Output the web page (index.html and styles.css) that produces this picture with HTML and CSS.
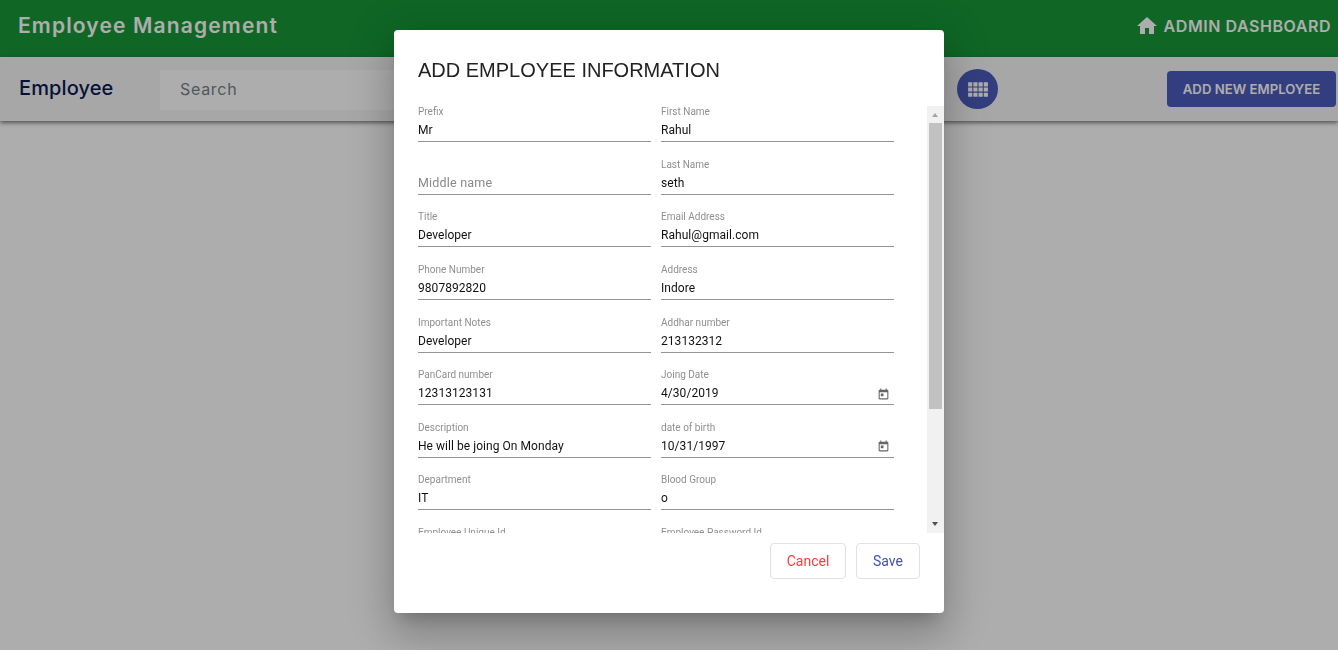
FILE: index.html
```html
<!DOCTYPE html>
<html lang="en">
<head>
    <meta charset="UTF-8">
    <title>Employee Management</title>
    <link rel="stylesheet" href="styles.css">
</head>
<body>
    <header class="topbar">
        <span class="brand">Employee Management</span>
        <a class="dash-link">
            <svg class="home-icon" viewBox="0 0 24 24"><path d="M10 20v-6h4v6h5v-8h3L12 3 2 12h3v8z"/></svg>
            ADMIN DASHBOARD
        </a>
    </header>
    <div class="toolbar">
        <span class="page-title">Employee</span>
        <input class="search" type="text" placeholder="Search">
        <button class="round-btn">
            <svg class="grid-icon" viewBox="0 0 24 24"><path d="M3 9h4V5H3v4zm0 5h4v-4H3v4zm5 0h4v-4H8v4zm5 0h4v-4h-4v4zM8 9h4V5H8v4zm5-4v4h4V5h-4zm5 9h4v-4h-4v4zM3 19h4v-4H3v4zm5 0h4v-4H8v4zm5 0h4v-4h-4v4zm5 0h4v-4h-4v4zm0-14v4h4V5h-4z"/></svg>
        </button>
        <button class="add-btn">ADD NEW EMPLOYEE</button>
    </div>

    <div class="backdrop"></div>

    <div class="modal">
        <h2 class="modal-title">ADD EMPLOYEE INFORMATION</h2>
        <div class="modal-body">
            <form class="form-grid" autocomplete="off">
                <div class="field"><label>Prefix</label><input type="text" value="Mr"></div>
                <div class="field"><label>First Name</label><input type="text" value="Rahul"></div>
                <div class="field"><label></label><input class="big-ph" type="text" placeholder="Middle name"></div>
                <div class="field"><label>Last Name</label><input type="text" value="seth"></div>
                <div class="field"><label>Title</label><input type="text" value="Developer"></div>
                <div class="field"><label>Email Address</label><input type="text" value="Rahul@gmail.com"></div>
                <div class="field"><label>Phone Number</label><input type="text" value="9807892820"></div>
                <div class="field"><label>Address</label><input type="text" value="Indore"></div>
                <div class="field"><label>Important Notes</label><input type="text" value="Developer"></div>
                <div class="field"><label>Addhar number</label><input type="text" value="213132312"></div>
                <div class="field"><label>PanCard number</label><input type="text" value="12313123131"></div>
                <div class="field">
                    <label>Joing Date</label>
                    <div class="date-wrap">
                        <input type="text" value="4/30/2019">
                        <svg class="cal-icon" viewBox="0 0 24 24"><path d="M19 3h-1V1h-2v2H8V1H6v2H5c-1.11 0-1.99.9-1.99 2L3 19c0 1.1.89 2 2 2h14c1.1 0 2-.9 2-2V5c0-1.1-.9-2-2-2zm0 16H5V8h14v11zM7 10h5v5H7z"/></svg>
                    </div>
                </div>
                <div class="field"><label>Description</label><input type="text" value="He will be joing On Monday"></div>
                <div class="field">
                    <label>date of birth</label>
                    <div class="date-wrap">
                        <input type="text" value="10/31/1997">
                        <svg class="cal-icon" viewBox="0 0 24 24"><path d="M19 3h-1V1h-2v2H8V1H6v2H5c-1.11 0-1.99.9-1.99 2L3 19c0 1.1.89 2 2 2h14c1.1 0 2-.9 2-2V5c0-1.1-.9-2-2-2zm0 16H5V8h14v11zM7 10h5v5H7z"/></svg>
                    </div>
                </div>
                <div class="field"><label>Department</label><input type="text" value="IT"></div>
                <div class="field"><label>Blood Group</label><input type="text" value="o"></div>
                <div class="field"><label>Employee Unique Id</label><input type="text"></div>
                <div class="field"><label>Employee Password Id</label><input type="text"></div>
            </form>
            <div class="scrollbar">
                <span class="arrow-up"></span>
                <span class="thumb"></span>
                <span class="arrow-down"></span>
            </div>
        </div>
        <div class="modal-actions">
            <button class="text-btn cancel">Cancel</button>
            <button class="text-btn save">Save</button>
        </div>
    </div>
</body>
</html>
```

FILE: styles.css
```css
* {
    box-sizing: border-box;
}

html, body {
    height: 100%;
}

body {
    margin: 0;
    background: #fff;
    overflow: hidden;
    font-family: Inter, "Liberation Sans", sans-serif;
}

.topbar {
    height: 57px;
    background: #179737;
    display: flex;
    align-items: center;
    justify-content: space-between;
    padding: 0 7px 6px 18px;
    color: #fff;
}

.brand {
    font-size: 21px;
    font-weight: 600;
    letter-spacing: 1.15px;
}

.dash-link {
    display: flex;
    align-items: center;
    gap: 5px;
    font-size: 16px;
    font-weight: 600;
    letter-spacing: 0.55px;
}

.home-icon {
    width: 24px;
    height: 24px;
    fill: #fff;
}

.toolbar {
    height: 64px;
    background: #f7f7f7;
    display: flex;
    align-items: center;
    padding: 0 2px 0 19px;
    box-shadow: 0 2px 4px rgba(0, 0, 0, 0.5);
}

.page-title {
    width: 141px;
    margin-bottom: 2px;
    font-size: 20px;
    font-weight: 500;
    letter-spacing: 0.1px;
    color: #0a1a4f;
}

.search {
    width: 785px;
    height: 40px;
    margin-top: 2px;
    border: none;
    outline: none;
    background: #fff;
    padding: 0 20px 2px;
    font-family: Inter, sans-serif;
    font-size: 16px;
    letter-spacing: 0.7px;
}

.search::placeholder {
    color: #7a7f8a;
}

.round-btn {
    width: 41px;
    height: 40px;
    margin-left: 12px;
    border: none;
    border-radius: 50%;
    background: #4b5cbb;
    padding: 0;
    display: flex;
    align-items: center;
    justify-content: center;
}

.grid-icon {
    width: 25px;
    height: 25px;
    fill: #fff;
}

.add-btn {
    width: 169px;
    height: 36px;
    margin-left: auto;
    border: none;
    border-radius: 4px;
    background: #4b5cbb;
    color: #fff;
    font-family: Inter, sans-serif;
    font-size: 13.2px;
    font-weight: 600;
}

.backdrop {
    position: fixed;
    inset: 0;
    background: rgba(0, 0, 0, 0.32);
}

.modal {
    position: absolute;
    left: 394px;
    top: 30px;
    width: 550px;
    height: 583px;
    background: #fff;
    border-radius: 4px;
    box-shadow: 0 11px 15px -7px rgba(0, 0, 0, 0.2), 0 24px 38px 3px rgba(0, 0, 0, 0.14), 0 9px 46px 8px rgba(0, 0, 0, 0.12);
    display: flex;
    flex-direction: column;
}

.modal-title {
    margin: 0;
    height: 76px;
    padding: 28px 0 0 24px;
    font-family: "Liberation Sans", Arial, sans-serif;
    font-size: 20px;
    line-height: 24px;
    font-weight: 400;
    color: #222;
}

.modal-body {
    position: relative;
    height: 427px;
    padding-left: 24px;
    overflow: hidden;
}

.scrollbar {
    position: absolute;
    top: 0;
    right: 0;
    bottom: 0;
    width: 17px;
    background: #f1f1f1;
}

.thumb {
    position: absolute;
    top: 17px;
    left: 2px;
    width: 13px;
    height: 286px;
    background: #c1c1c1;
}

.arrow-up, .arrow-down {
    position: absolute;
    left: 5px;
    width: 0;
    height: 0;
    border-left: 3.5px solid transparent;
    border-right: 3.5px solid transparent;
}

.arrow-up {
    top: 7px;
    border-bottom: 4px solid #a3a3a3;
}

.arrow-down {
    bottom: 7px;
    border-top: 4px solid #505050;
}

.form-grid {
    display: grid;
    grid-template-columns: 233px 233px;
    grid-auto-rows: 36.4px;
    gap: 16.17px 10px;
}

.field {
    display: flex;
    flex-direction: column;
    justify-content: flex-end;
    border-bottom: 1px solid #949494;
}

.field label {
    font-family: Roboto, sans-serif;
    font-size: 10px;
    line-height: 12px;
    color: #8f8f8f;
    margin-bottom: 3px;
}

.field input {
    width: 100%;
    height: 18px;
    border: none;
    outline: none;
    padding: 0;
    margin-bottom: 2px;
    background: transparent;
    font-family: Roboto, sans-serif;
    font-size: 12px;
    letter-spacing: 0.05px;
    color: #111;
}

.field input::placeholder {
    color: #8a8a8a;
    font-size: 12.5px;
    letter-spacing: 0.2px;
}

.date-wrap {
    display: flex;
    align-items: center;
}

.cal-icon {
    flex: none;
    width: 13px;
    height: 13px;
    margin-right: 4px;
    fill: #666;
}

.modal-actions {
    display: flex;
    justify-content: flex-end;
    gap: 10px;
    padding: 10px 24px 0 0;
}

.text-btn {
    height: 36px;
    background: #fff;
    border: 1px solid #e2e2e2;
    border-radius: 4px;
    font-family: Roboto, sans-serif;
    font-size: 14px;
}

.cancel {
    width: 76px;
    color: #ff3b3b;
}

.save {
    width: 64px;
    color: #3f51b5;
}
```
